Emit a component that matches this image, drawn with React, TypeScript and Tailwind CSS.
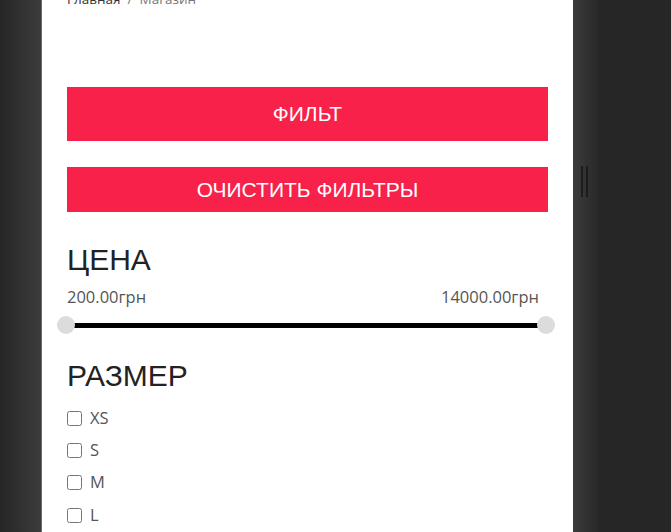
import React from "react";

const sizes = ["XS", "S", "M", "L"];

export default function App() {
  return (
    <div className="h-[532px] w-[671px] overflow-hidden bg-[#262626] flex">
      {/* left shadow */}
      <div className="w-[41px] h-full bg-gradient-to-r from-[#262626] to-[#3c3c3c]" />
      <div className="w-px h-full bg-[#6a6a6a]" />

      {/* main panel */}
      <main className="w-[531px] h-full bg-white px-[25px] flex flex-col shrink-0">
        <nav
          className="-mt-[11px] h-5 leading-5 text-[13.5px] text-[#777] flex gap-[7px]"
          style={{ fontFamily: "'Open Sans', sans-serif" }}
        >
          <span className="text-[#333]">Главная</span>
          <span>/</span>
          <span>Магазин</span>
        </nav>

        <button
          className="mt-[78px] h-[54px] w-full bg-[#f8214a] text-white text-[21px] uppercase"
          style={{ fontFamily: "'Liberation Sans', Arial, sans-serif" }}
        >
          Фильт
        </button>

        <button
          className="mt-[26px] h-[45px] w-full bg-[#f8214a] text-white text-[21px] uppercase"
          style={{ fontFamily: "'Liberation Sans', Arial, sans-serif" }}
        >
          Очистить фильтры
        </button>

        <h2
          className="mt-[28px] h-10 leading-10 text-[30px] text-[#222]"
          style={{ fontFamily: "'Liberation Sans', Arial, sans-serif" }}
        >
          ЦЕНА
        </h2>

        <div
          className="mt-[5px] h-6 leading-6 text-[16.5px] text-[#555] flex justify-between pr-[9px]"
          style={{ fontFamily: "'Open Sans', sans-serif" }}
        >
          <span>200.00грн</span>
          <span>14000.00грн</span>
        </div>

        {/* price slider */}
        <div className="mt-[7px] h-[18px] relative">
          <div className="absolute left-0 right-[2px] top-[7px] h-[5px] bg-black" />
          <div className="absolute -left-[10px] top-0 w-[18px] h-[18px] rounded-full bg-[#dcdcdc]" />
          <div className="absolute -right-[7px] top-0 w-[18px] h-[18px] rounded-full bg-[#dcdcdc]" />
        </div>

        <h2
          className="mt-[22px] h-10 leading-10 text-[30px] text-[#222]"
          style={{ fontFamily: "'Liberation Sans', Arial, sans-serif" }}
        >
          РАЗМЕР
        </h2>

        <ul className="mt-[6px] flex flex-col">
          {sizes.map((s) => (
            <li key={s} className="h-[32.3px] flex items-center gap-[8px]">
              <input type="checkbox" className="w-[15px] h-[15px] m-0 accent-[#555]" />
              <span
                className="text-[16.5px] text-[#555]"
                style={{ fontFamily: "'Open Sans', sans-serif" }}
              >
                {s}
              </span>
            </li>
          ))}
        </ul>
      </main>

      {/* right shadow with grip */}
      <div className="w-[25px] h-full bg-gradient-to-r from-[#3c3c3c] to-[#292929] relative shrink-0">
        <div className="absolute left-[8px] top-[166px] w-[2px] h-[31px] bg-[#1c1c1c]" />
        <div className="absolute left-[13px] top-[166px] w-[2px] h-[31px] bg-[#1c1c1c]" />
      </div>
      <div className="flex-1 h-full bg-[#262626]" />
    </div>
  );
}
